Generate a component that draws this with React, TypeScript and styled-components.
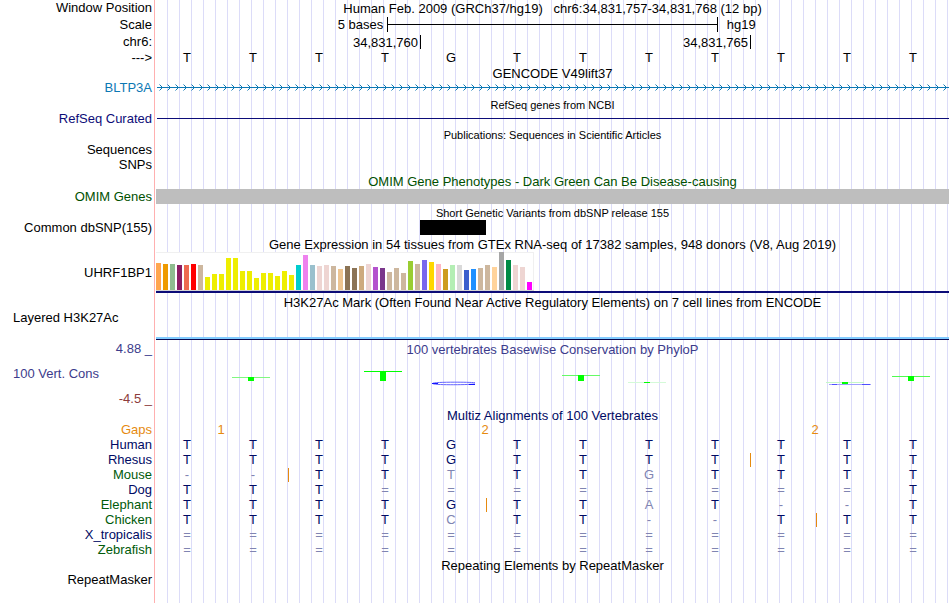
import React from "react";
import styled, { createGlobalStyle } from "styled-components";

const GlobalStyle = createGlobalStyle`
  body {
    margin: 0;
    background: #fff;
    color: #000;
    font: 13px/14px "Liberation Sans", Arial, Helvetica, sans-serif;
  }
`;

const navy = "#0c0c78";
const alignBlue = "#000a64";
const alignGreen = "#005a0a";
const wiggle = "#3c3c8c";
const omim = "#005000";
const orange = "#e68a0f";

const Browser = styled.main`
  min-height: 100vh;
  background:
    linear-gradient(#ffb0b0, #ffb0b0) 154px 0 / 1px 100% no-repeat,
    repeating-linear-gradient(to right, #dcdcf8 0 1px, transparent 1px 12px) 167px 0 no-repeat;
`;

const Row = styled.div<{ $height: number }>`
  display: grid;
  grid-template-columns: 154px minmax(0, 1fr);
  min-height: ${(p) => p.$height}px;
`;

const Label = styled.div<{ $color?: string; $left?: boolean; $top?: boolean }>`
  align-self: ${(p) => (p.$top ? "start" : "center")};
  text-align: ${(p) => (p.$left ? "left" : "right")};
  padding: 0 2px 0 13px;
  color: ${(p) => p.$color || "#000"};
  white-space: nowrap;
`;

const Plot = styled.div`
  display: flex;
  flex-direction: column;
  justify-content: center;
  grid-column: 2;
  padding: 0 1px 0 2px;
`;

const Title = styled.h2<{ $color?: string; $small?: boolean }>`
  margin: 0;
  height: 14px;
  line-height: 16px;
  font-size: ${(p) => (p.$small ? 11 : 13)}px;
  font-weight: 400;
  text-align: center;
  white-space: pre;
  color: ${(p) => p.$color || "#000"};
`;

const ScaleGrid = styled.div`
  display: grid;
  grid-template-columns: 7fr 10fr 7fr;
  align-items: center;
`;
const ScaleText = styled.span<{ $end?: boolean }>`
  text-align: ${(p) => (p.$end ? "right" : "left")};
  padding: ${(p) => (p.$end ? "0 4px 0 0" : "0 0 0 9px")};
`;
const ScaleBar = styled.div`
  display: flex;
  align-items: center;
  height: 15px;
  border: solid #000;
  border-width: 0 1px;
  &::before {
    content: "";
    flex: 1;
    height: 1px;
    background: #000;
  }
`;

const Ruler = styled.div`
  display: grid;
  grid-template-columns: 4fr 5fr 3fr;
  margin-right: 1px;
`;
const RulerCell = styled.span<{ $tick?: boolean }>`
  text-align: right;
  padding-right: 2px;
  height: 14px;
  line-height: 16px;
  border-left: ${(p) => (p.$tick ? "1px solid #000" : "0")};
`;

const Bases = styled.div`
  display: grid;
  grid-template-columns: repeat(12, 1fr);
  margin-right: 1px;
`;
const Base = styled.span<{ $color: string; $insert?: boolean }>`
  text-align: center;
  padding-right: 5px;
  height: 14px;
  line-height: 14px;
  color: ${(p) => p.$color};
  border-left: 1px solid ${(p) => (p.$insert ? orange : "transparent")};
`;
const Gaps = styled.div`
  display: grid;
  grid-template-columns: 1fr repeat(11, 2fr) 1fr;
  margin-right: 1px;
  color: ${orange};
`;
const Gap = styled.span`
  text-align: center;
  padding-right: 2px;
`;

const IntronLine = styled.svg`
  display: block;
  width: 100%;
  height: 16px;
`;
const RefSeqLine = styled.div`
  height: 1px;
  margin: 0 0 1px 1px;
  background: ${navy};
`;
const OmimBar = styled.div`
  height: 15px;
  background: #bebebe;
`;
const Variant = styled.div`
  grid-column: 5;
  height: 15px;
  background: #000;
`;
const Chart = styled.svg`
  display: block;
  width: 378px;
  height: 39px;
`;
const GeneLine = styled.div`
  height: 2px;
  background: ${navy};
`;
const AcetylPlot = styled(Plot)`
  justify-content: flex-end;
`;
const AcetylLine = styled.div`
  height: 2px;
  background: #82ccff;
  border-bottom: 1px solid #0a0a50;
`;
const Logo = styled.svg`
  display: block;
  width: 66px;
  height: 33px;
`;

const tissues: [string, number][] = [
  ["#ffa54f", 27], ["#ee9a00", 26], ["#8fbc8f", 26], ["#8b1c62", 25], ["#ee6a50", 25], ["#ff0000", 26],
  ["#cdb79e", 25], ["#eeee00", 13], ["#eeee00", 16], ["#eeee00", 16], ["#eeee00", 32], ["#eeee00", 32],
  ["#eeee00", 19], ["#eeee00", 19], ["#eeee00", 12], ["#eeee00", 17], ["#eeee00", 17], ["#eeee00", 14],
  ["#eeee00", 19], ["#eeee00", 15], ["#00cdcd", 25], ["#ee82ee", 35], ["#9ac0cd", 25], ["#eed5d2", 24],
  ["#eed5d2", 25], ["#cdb79e", 24], ["#eec591", 21], ["#8b7355", 24], ["#8b7355", 22], ["#cdaa7d", 24],
  ["#eed5d2", 26], ["#b452cd", 23], ["#7a378b", 22], ["#cdb79e", 18], ["#cdb79e", 22], ["#cdb79e", 17],
  ["#9acd32", 29], ["#cdb79e", 26], ["#7a67ee", 30], ["#ffd700", 28], ["#ffb6c1", 26], ["#cd9b1d", 21],
  ["#b4eeb4", 25], ["#d9d9d9", 25], ["#3a5fcd", 20], ["#1e90ff", 21], ["#cdb79e", 22], ["#cdb79e", 25],
  ["#ffd39b", 23], ["#a6a6a6", 38], ["#008b45", 30], ["#eed5d2", 25], ["#eed5d2", 23], ["#ff00ff", 8],
];

const species: { name: string; color: string; bases: string; faded?: number[]; insert?: number }[] = [
  { name: "Human", color: alignBlue, bases: "TTTTGTTTTTTT" },
  { name: "Rhesus", color: alignBlue, bases: "TTTTGTTTTTTT", insert: 9 },
  { name: "Mouse", color: alignGreen, bases: "--TTTTTGTTTT", faded: [4, 7], insert: 2 },
  { name: "Dog", color: alignBlue, bases: "TTT========T" },
  { name: "Elephant", color: alignGreen, bases: "TTTTGTTAT--T", faded: [7], insert: 5 },
  { name: "Chicken", color: alignGreen, bases: "TTTTCTT--TTT", faded: [4], insert: 10 },
  { name: "X_tropicalis", color: alignBlue, bases: "============" },
  { name: "Zebrafish", color: alignGreen, bases: "============" },
];

const gapCounts: Record<number, string> = { 1: "1", 5: "2", 10: "2" };

// Height and cap colour of the conserved T drawn at each column.
const conserved: Record<number, { top: number; height: number; cap: string }> = {
  1: { top: 20, height: 4, cap: "#80f880" },
  3: { top: 14, height: 10, cap: "#00ff00" },
  6: { top: 18, height: 6, cap: "#66fa66" },
  7: { top: 25, height: 1, cap: "#d4fad8" },
  10: { top: 25, height: 2, cap: "#c4f8c8" },
  11: { top: 19, height: 5, cap: "#50fc50" },
};

const Heading = ({ height, color, small, label, labelColor, children }: {
  height: number; color?: string; small?: boolean; label?: string; labelColor?: string; children: React.ReactNode;
}) => (
  <Row $height={height}>
    {label && <Label $color={labelColor}>{label}</Label>}
    <Plot><Title $color={color} $small={small}>{children}</Title></Plot>
  </Row>
);

export default function App() {
  return (
    <>
      <GlobalStyle />
      <Browser>
        <Heading height={16} label="Window Position">
          {"Human Feb. 2009 (GRCh37/hg19)   chr6:34,831,757-34,831,768 (12 bp)"}
        </Heading>
        <Row $height={17}>
          <Label>Scale</Label>
          <Plot>
            <ScaleGrid>
              <ScaleText $end>5 bases</ScaleText>
              <ScaleBar />
              <ScaleText>hg19</ScaleText>
            </ScaleGrid>
          </Plot>
        </Row>
        <Row $height={17}>
          <Label>chr6:</Label>
          <Plot>
            <Ruler>
              <RulerCell>34,831,760</RulerCell>
              <RulerCell $tick>34,831,765</RulerCell>
              <RulerCell $tick />
            </Ruler>
          </Plot>
        </Row>
        <Row $height={16}>
          <Label>---&gt;</Label>
          <Plot>
            <Bases>
              {"TTTTGTTTTTTT".split("").map((b, i) => <Base key={i} $color="#000">{b}</Base>)}
            </Bases>
          </Plot>
        </Row>

        <Heading height={14}>GENCODE V49lift37</Heading>
        <Row $height={16}>
          <Label $color="#0c78b4">BLTP3A</Label>
          <Plot>
            <IntronLine>
              <defs>
                <pattern id="strand" x="3" width="8" height="16" patternUnits="userSpaceOnUse">
                  <path d="M0.5 4.5 L3.5 7.5 L0.5 10.5" fill="none" stroke="#0c78b4" />
                </pattern>
              </defs>
              <rect x="1" y="7" width="100%" height="1" fill="#0c78b4" />
              <rect x="1" width="100%" height="16" fill="url(#strand)" />
            </IntronLine>
          </Plot>
        </Row>

        <Heading height={16} small>RefSeq genes from NCBI</Heading>
        <Row $height={14}>
          <Label $color={navy}>RefSeq Curated</Label>
          <Plot><RefSeqLine /></Plot>
        </Row>

        <Heading height={16} small>Publications: Sequences in Scientific Articles</Heading>
        <Row $height={15}><Label>Sequences</Label></Row>
        <Row $height={16}><Label>SNPs</Label></Row>

        <Heading height={16} color={omim}>OMIM Gene Phenotypes - Dark Green Can Be Disease-causing</Heading>
        <Row $height={15}>
          <Label $color={omim}>OMIM Genes</Label>
          <Plot><OmimBar /></Plot>
        </Row>

        <Heading height={16} small>Short Genetic Variants from dbSNP release 155</Heading>
        <Row $height={15}>
          <Label>Common dbSNP(155)</Label>
          <Plot><Bases><Variant /></Bases></Plot>
        </Row>

        <Heading height={17}>
          Gene Expression in 54 tissues from GTEx RNA-seq of 17382 samples, 948 donors (V8, Aug 2019)
        </Heading>
        <Row $height={41}>
          <Label>UHRF1BP1</Label>
          <Plot>
            <Chart shapeRendering="crispEdges">
              <rect width="378" height="39" fill="#f0f0f0" />
              <rect y="1" width="377" height="37" fill="#fff" />
              <rect y="38" width="378" height="1" fill="#d4d4d4" />
              {tissues.map(([color, h], i) => (
                <rect key={i} x={i * 7} y={38 - h} width="5" height={h} fill={color} />
              ))}
            </Chart>
            <GeneLine />
          </Plot>
        </Row>

        <Heading height={18}>
          H3K27Ac Mark (Often Found Near Active Regulatory Elements) on 7 cell lines from ENCODE
        </Heading>
        <Row $height={29}>
          <Label $left $top>Layered H3K27Ac</Label>
          <AcetylPlot><AcetylLine /></AcetylPlot>
        </Row>

        <Heading height={17} color={wiggle} label="4.88 _" labelColor={wiggle}>
          100 vertebrates Basewise Conservation by PhyloP
        </Heading>
        <Row $height={33}>
          <Label $left $color={wiggle}>100 Vert. Cons</Label>
          <Plot>
            <Bases>
              {Array.from({ length: 12 }, (_, i) => {
                const t = conserved[i];
                return (
                  <Logo key={i} viewBox="0 0 66 33">
                    {t && (
                      <g shapeRendering="crispEdges">
                        <rect x="10" y={t.top} width="38" height="1" fill={t.cap} />
                        <rect x="26" y={t.top} width="6" height={t.height} fill="#00ff00" />
                      </g>
                    )}
                    {i === 4 && (
                      <g fill="none">
                        <path d="M55 25.7 C46 24.9 12 24.9 12.5 26.5 C13 28.1 45 28 55 27" stroke="#6464ff" />
                        <path d="M12 26.5 H18 M49 27.5 H55" stroke="#1414ff" />
                      </g>
                    )}
                    {i === 10 && (
                      <g fill="none">
                        <path d="M13 27.5 H55" stroke="#a0a0ff" />
                        <path d="M16 27.5 H21 M46 27.5 H54" stroke="#5050ff" />
                      </g>
                    )}
                  </Logo>
                );
              })}
            </Bases>
          </Plot>
        </Row>
        <Row $height={17}><Label $color="#8c3c3c">-4.5 _</Label></Row>

        <Heading height={15} color={alignBlue}>Multiz Alignments of 100 Vertebrates</Heading>
        <Row $height={15}>
          <Label $color={orange}>Gaps</Label>
          <Plot>
            <Gaps>
              {Array.from({ length: 13 }, (_, i) => <Gap key={i}>{gapCounts[i]}</Gap>)}
            </Gaps>
          </Plot>
        </Row>
        {species.map((s) => (
          <Row key={s.name} $height={15}>
            <Label $color={s.color}>{s.name}</Label>
            <Plot>
              <Bases>
                {s.bases.split("").map((b, i) => (
                  <Base
                    key={i}
                    $insert={s.insert === i}
                    $color={"-=".includes(b) || s.faded?.includes(i) ? "#8085b2" : alignBlue}
                  >
                    {b}
                  </Base>
                ))}
              </Bases>
            </Plot>
          </Row>
        ))}

        <Heading height={15}>Repeating Elements by RepeatMasker</Heading>
        <Row $height={15}><Label>RepeatMasker</Label></Row>
      </Browser>
    </>
  );
}
